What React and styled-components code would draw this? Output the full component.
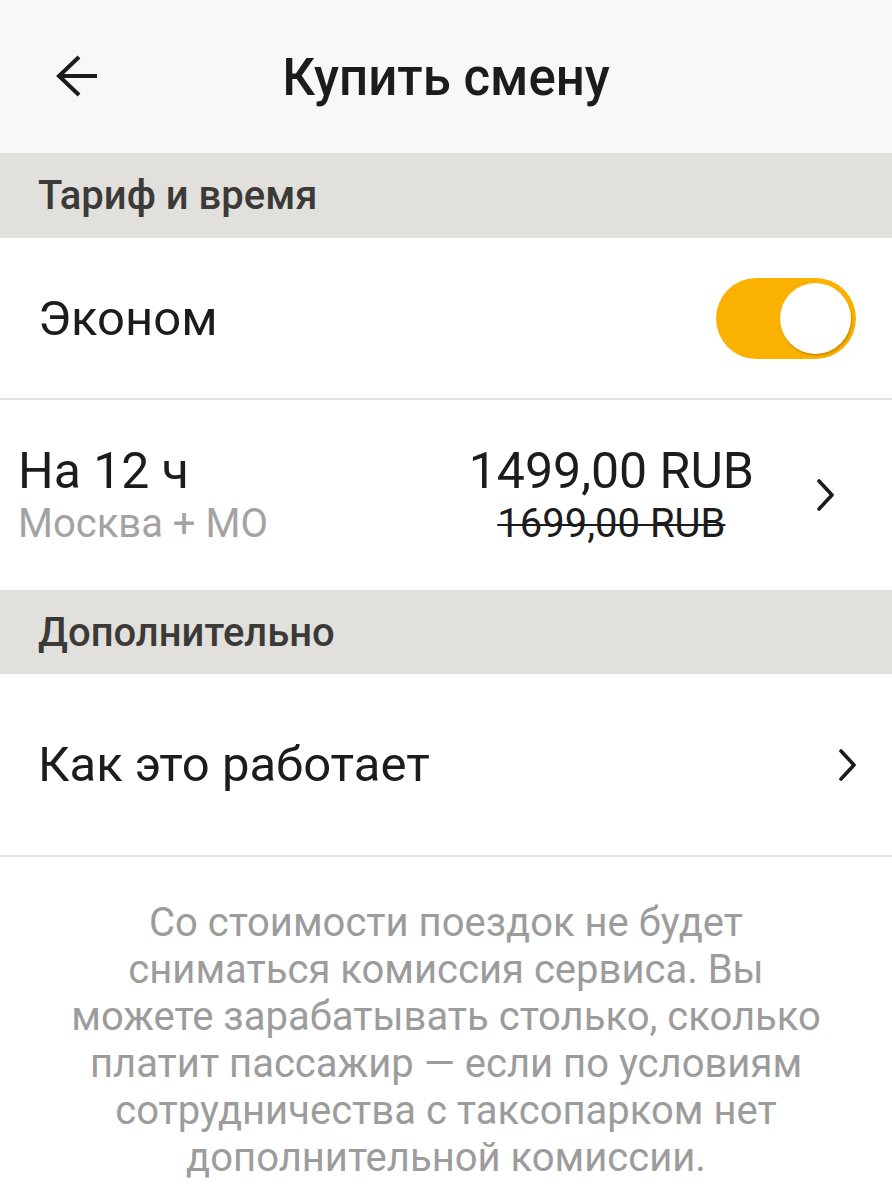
import React from "react";
import styled, { createGlobalStyle } from "styled-components";

const Global = createGlobalStyle`
  html, body { margin: 0; padding: 0; background: #ffffff; }
  body { font-family: Roboto, "Noto Sans", sans-serif; color: #1f1f1f; }
  * { box-sizing: border-box; }
`;

const Page = styled.div`
  width: 892px;
  display: flex;
  flex-direction: column;
`;

const Header = styled.header`
  height: 153px;
  background: #f9f8f6;
  display: flex;
  align-items: center;
  position: relative;
  justify-content: center;
`;

const BackButton = styled.div`
  position: absolute;
  left: 55px;
  top: 54px;
  width: 44px;
  height: 44px;
`;

const Title = styled.h1`
  margin: 0;
  font-size: 51px;
  font-weight: 500;
  color: #1c1c1c;
  transform: translateY(1px);
`;

const Section = styled.div`
  height: ${(p) => p.h}px;
  background: #e1e0dd;
  display: flex;
  align-items: center;
  padding-left: 38px;
  font-size: 40px;
  font-weight: 500;
  color: #3b3a37;
`;

const Row = styled.div`
  height: ${(p) => p.h}px;
  display: flex;
  align-items: center;
  justify-content: space-between;
  padding: 0 ${(p) => p.pr}px 0 ${(p) => p.pl}px;
  border-bottom: ${(p) => (p.divider ? "2px solid #e3e3e3" : "none")};
`;

const Label = styled.div`
  font-size: 49px;
  color: #1c1c1c;
`;

const Toggle = styled.div`
  width: 140px;
  height: 81px;
  border-radius: 41px;
  background: #fbb100;
  display: flex;
  align-items: center;
  justify-content: flex-end;
  padding-right: 5px;
`;

const Knob = styled.div`
  width: 71px;
  height: 71px;
  border-radius: 50%;
  background: #ffffff;
  box-shadow: 1px 2px 2px rgba(120, 80, 0, 0.35);
`;

const Col = styled.div`
  display: flex;
  flex-direction: column;
  align-items: ${(p) => p.align || "flex-start"};
`;

const Primary = styled.div`
  font-size: 50px;
  line-height: 58px;
  color: #1c1c1c;
`;

const Secondary = styled.div`
  font-size: 40px;
  line-height: 48px;
  color: ${(p) => (p.strike ? "#1c1c1c" : "#a3a3a3")};
  text-decoration: ${(p) => (p.strike ? "line-through" : "none")};
  text-decoration-thickness: 2px;
`;

const PriceGroup = styled.div`
  display: flex;
  align-items: center;
  gap: 62px;
`;

const Footer = styled.p`
  margin: 0;
  padding: 42px 40px 0;
  text-align: center;
  font-size: 40px;
  line-height: 47px;
  color: #9c9c9c;
`;

const Chevron = () => (
  <svg width="20" height="32" viewBox="0 0 20 32" fill="none">
    <polyline
      points="3,2 16,16 3,30"
      stroke="#1c1c1c"
      strokeWidth="3.6"
      strokeLinecap="round"
      strokeLinejoin="round"
    />
  </svg>
);

const BackArrow = () => (
  <svg width="44" height="44" viewBox="0 0 44 44" fill="none">
    <path
      d="M4 22 H42 M24 3 L4 22 L24 41"
      stroke="#1c1c1c"
      strokeWidth="4"
      strokeLinecap="butt"
      strokeLinejoin="miter"
    />
  </svg>
);

export default function App() {
  return (
    <Page>
      <Global />
      <Header>
        <BackButton>
          <BackArrow />
        </BackButton>
        <Title>Купить смену</Title>
      </Header>
      <Section h={85}>Тариф и время</Section>
      <Row h={162} pl={38} pr={36} divider>
        <Label>Эконом</Label>
        <Toggle>
          <Knob />
        </Toggle>
      </Row>
      <Row h={190} pl={18} pr={56}>
        <Col>
          <Primary>На 12 ч</Primary>
          <Secondary>Москва + МО</Secondary>
        </Col>
        <PriceGroup>
          <Col align="center">
            <Primary>1499,00 RUB</Primary>
            <Secondary strike>1699,00 RUB</Secondary>
          </Col>
          <Chevron />
        </PriceGroup>
      </Row>
      <Section h={84}>Дополнительно</Section>
      <Row h={183} pl={38} pr={34} divider>
        <Label>Как это работает</Label>
        <Chevron />
      </Row>
      <Footer>
        Со стоимости поездок не будет
        <br />
        сниматься комиссия сервиса. Вы
        <br />
        можете зарабатывать столько, сколько
        <br />
        платит пассажир — если по условиям
        <br />
        сотрудничества с таксопарком нет
        <br />
        дополнительной комиссии.
      </Footer>
    </Page>
  );
}
